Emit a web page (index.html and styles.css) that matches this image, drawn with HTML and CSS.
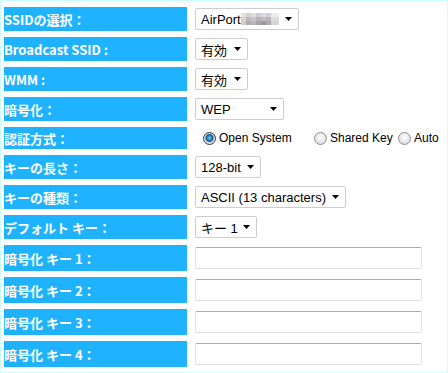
FILE: index.html
```html
<!DOCTYPE html>
<html lang="ja">
<head>
    <meta charset="UTF-8">
    <title>ワイヤレス設定</title>
    <link rel="stylesheet" href="styles.css">
</head>
<body>
<div class="marco">
    <div class="fila">
        <div class="etiqueta">SSIDの選択：</div>
        <div class="campo">
            <div class="select w-ssid"><span>AirPort<span class="mosaico"></span></span><svg class="flecha" width="7" height="4"><polygon points="0,0 7,0 3.5,4" fill="#000"/></svg></div>
        </div>
    </div>
    <div class="fila">
        <div class="etiqueta">Broadcast SSID :</div>
        <div class="campo">
            <div class="select w-corto"><span>有効</span><svg class="flecha" width="7" height="4"><polygon points="0,0 7,0 3.5,4" fill="#000"/></svg></div>
        </div>
    </div>
    <div class="fila separada">
        <div class="etiqueta">WMM :</div>
        <div class="campo">
            <div class="select w-corto"><span>有効</span><svg class="flecha" width="7" height="4"><polygon points="0,0 7,0 3.5,4" fill="#000"/></svg></div>
        </div>
    </div>
    <div class="fila">
        <div class="etiqueta">暗号化：</div>
        <div class="campo">
            <div class="select w-wep"><span>WEP</span><svg class="flecha" width="7" height="4"><polygon points="0,0 7,0 3.5,4" fill="#000"/></svg></div>
        </div>
    </div>
    <div class="fila radios">
        <div class="etiqueta">認証方式：</div>
        <div class="campo">
            <label class="opcion op1"><span class="radio marcado"></span>Open System</label>
            <label class="opcion op2"><span class="radio"></span>Shared Key</label>
            <label class="opcion"><span class="radio"></span>Auto</label>
        </div>
    </div>
    <div class="fila">
        <div class="etiqueta">キーの長さ：</div>
        <div class="campo">
            <div class="select w-bits"><span>128-bit</span><svg class="flecha" width="7" height="4"><polygon points="0,0 7,0 3.5,4" fill="#000"/></svg></div>
        </div>
    </div>
    <div class="fila">
        <div class="etiqueta">キーの種類：</div>
        <div class="campo">
            <div class="select w-ascii"><span>ASCII (13 characters)</span><svg class="flecha" width="7" height="4"><polygon points="0,0 7,0 3.5,4" fill="#000"/></svg></div>
        </div>
    </div>
    <div class="fila">
        <div class="etiqueta">デフォルト キー：</div>
        <div class="campo">
            <div class="select w-clave"><span>キー 1</span><svg class="flecha" width="7" height="4"><polygon points="0,0 7,0 3.5,4" fill="#000"/></svg></div>
        </div>
    </div>
    <div class="fila alta">
        <div class="etiqueta">暗号化 キー 1：</div>
        <div class="campo"><input type="text" class="texto"></div>
    </div>
    <div class="fila alta">
        <div class="etiqueta">暗号化 キー 2：</div>
        <div class="campo"><input type="text" class="texto"></div>
    </div>
    <div class="fila alta">
        <div class="etiqueta">暗号化 キー 3：</div>
        <div class="campo"><input type="text" class="texto"></div>
    </div>
    <div class="fila alta">
        <div class="etiqueta">暗号化 キー 4：</div>
        <div class="campo"><input type="text" class="texto"></div>
    </div>
</div>
</body>
</html>
```

FILE: styles.css
```css
body {
    margin: 0;
    background-color: white;
    font-family: 'Liberation Sans', 'Noto Sans CJK JP', sans-serif;
    color: #000;
}
.marco {
    width: 448px;
    height: 373px;
    box-sizing: border-box;
    border: 1px solid #ccffff;
    padding: 6px 0 0 3px;
}
.fila {
    display: flex;
    gap: 8px;
    height: 24px;
    margin-bottom: 6px;
}
.fila.separada {
    margin-top: 4px;
}
.fila.radios {
    height: 22px;
}
.fila.alta {
    height: 26px;
}
.etiqueta {
    width: 183px;
    flex: none;
    background-color: #1fb3ff;
    color: white;
    font-family: 'Noto Sans CJK JP', sans-serif;
    font-weight: bold;
    font-size: 13px;
    display: flex;
    align-items: center;
    white-space: pre;
}
.campo {
    display: flex;
    align-items: center;
    flex: 1;
}
.select {
    height: 22px;
    box-sizing: border-box;
    border: 1px solid #cdcdcd;
    border-radius: 2px;
    display: flex;
    align-items: center;
    justify-content: space-between;
    padding: 0 6px 0 5px;
    font-size: 13px;
    white-space: nowrap;
}
.select span {
    display: flex;
    align-items: center;
}
.w-ssid { width: 104px; }
.w-corto { width: 53px; }
.w-wep { width: 89px; }
.w-bits { width: 66px; }
.w-ascii { width: 151px; }
.w-clave { width: 62px; }
.flecha {
    flex: none;
}
.mosaico {
    display: inline-block;
    width: 38px;
    height: 12px;
    margin-left: 0;
    background:
        linear-gradient(90deg, #e4e0e0 0 5px, #d2cfd2 5px 10px, #e0dcdc 10px 15px, #cfcbd0 15px 20px, #dcd8dc 20px 25px, #d2d2d6 25px 30px, #ececee 30px 38px) top / 38px 4px no-repeat,
        linear-gradient(90deg, #d6d2d2 0 5px, #bcb8bc 5px 10px, #c8c4c8 10px 15px, #b4b0b8 15px 20px, #c2bec4 20px 25px, #b8b8bc 25px 30px, #dcdcde 30px 38px) center / 38px 4px no-repeat,
        linear-gradient(90deg, #cfcbcb 0 5px, #aeaab0 5px 10px, #bab6bc 10px 15px, #a8a4ac 15px 20px, #9c9898 20px 25px, #acacb4 25px 30px, #d4d4d8 30px 38px) bottom / 38px 4px no-repeat;
}
.opcion {
    display: flex;
    align-items: center;
    gap: 3px;
    font-size: 12px;
    white-space: nowrap;
}
.op1 {
    margin-left: 8px;
    width: 111px;
}
.op2 {
    width: 84px;
}
.radio {
    width: 13px;
    height: 13px;
    box-sizing: border-box;
    border-radius: 50%;
    border: 1px solid #8f8f8f;
    background: radial-gradient(circle at 50% 40%, #ffffff 0, #e6e6e6 55%, #cfcfcf 100%);
    flex: none;
}
.radio.marcado {
    border-color: #3c3c3c;
    background: radial-gradient(circle at 50% 45%, #7cc6f2 0, #2a8fd2 2px, #14578c 3.5px, #d8d8d8 4.5px, #f2f2f2 100%);
}
.texto {
    width: 227px;
    height: 22px;
    box-sizing: border-box;
    margin: 0;
    border: 1px solid #dfe3e8;
    border-top-color: #ababab;
    border-radius: 2px;
    background-color: white;
    padding: 0 4px;
    font-size: 13px;
}
```
